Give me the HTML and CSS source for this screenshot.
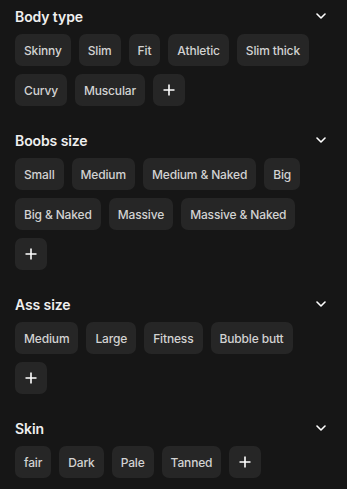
FILE: index.html
```html
<!DOCTYPE html>
<html>
<head>
<meta charset="utf-8">
<link rel="stylesheet" href="styles.css">
</head>
<body>
<div class="panel">
  <section class="group">
    <div class="group-head"><span class="title">Body type</span>
      <svg class="chev" width="10" height="6" viewBox="0 0 10 6"><path d="M1 1l4 4 4-4" fill="none" stroke="#fff" stroke-width="1.6" stroke-linecap="round" stroke-linejoin="round"/></svg></div>
    <div class="chips">
      <span class="chip">Skinny</span><span class="chip">Slim</span><span class="chip">Fit</span><span class="chip">Athletic</span><span class="chip">Slim thick</span>
      <span class="chip">Curvy</span><span class="chip">Muscular</span>
      <span class="chip plus"><svg width="12" height="12" viewBox="0 0 12 12"><path d="M6 0.5v11M0.5 6h11" stroke="#fff" stroke-width="1.6"/></svg></span>
    </div>
  </section>
  <section class="group">
    <div class="group-head"><span class="title">Boobs size</span>
      <svg class="chev" width="10" height="6" viewBox="0 0 10 6"><path d="M1 1l4 4 4-4" fill="none" stroke="#fff" stroke-width="1.6" stroke-linecap="round" stroke-linejoin="round"/></svg></div>
    <div class="chips">
      <span class="chip">Small</span><span class="chip">Medium</span><span class="chip">Medium &amp; Naked</span><span class="chip">Big</span>
      <span class="chip">Big &amp; Naked</span><span class="chip">Massive</span><span class="chip">Massive &amp; Naked</span>
      <span class="chip plus"><svg width="12" height="12" viewBox="0 0 12 12"><path d="M6 0.5v11M0.5 6h11" stroke="#fff" stroke-width="1.6"/></svg></span>
    </div>
  </section>
  <section class="group">
    <div class="group-head"><span class="title">Ass size</span>
      <svg class="chev" width="10" height="6" viewBox="0 0 10 6"><path d="M1 1l4 4 4-4" fill="none" stroke="#fff" stroke-width="1.6" stroke-linecap="round" stroke-linejoin="round"/></svg></div>
    <div class="chips">
      <span class="chip">Medium</span><span class="chip">Large</span><span class="chip">Fitness</span><span class="chip">Bubble butt</span>
      <span class="chip plus"><svg width="12" height="12" viewBox="0 0 12 12"><path d="M6 0.5v11M0.5 6h11" stroke="#fff" stroke-width="1.6"/></svg></span>
    </div>
  </section>
  <section class="group">
    <div class="group-head"><span class="title">Skin</span>
      <svg class="chev" width="10" height="6" viewBox="0 0 10 6"><path d="M1 1l4 4 4-4" fill="none" stroke="#fff" stroke-width="1.6" stroke-linecap="round" stroke-linejoin="round"/></svg></div>
    <div class="chips">
      <span class="chip">fair</span><span class="chip">Dark</span><span class="chip">Pale</span><span class="chip">Tanned</span>
      <span class="chip plus"><svg width="12" height="12" viewBox="0 0 12 12"><path d="M6 0.5v11M0.5 6h11" stroke="#fff" stroke-width="1.6"/></svg></span>
    </div>
  </section>
</div>
</body>
</html>
```
FILE: styles.css
```css
html, body {
  margin: 0;
  padding: 0;
  background: #161616;
}
body {
  font-family: Inter, "Noto Sans", sans-serif;
  width: 347px;
  height: 489px;
  overflow: hidden;
}
.panel {
  display: flex;
  flex-direction: column;
  gap: 24px;
  padding: 6px 21px 0 15px;
}
.group-head {
  height: 20px;
  display: flex;
  align-items: center;
  justify-content: space-between;
  margin-bottom: 8px;
}
.title {
  color: #efefef;
  font-size: 14px;
  font-weight: 600;
  letter-spacing: -0.1px;
}
.chev {
  display: block;
}
.chips {
  display: flex;
  flex-wrap: wrap;
  gap: 8px;
}
.chip {
  height: 32px;
  box-sizing: border-box;
  padding: 0 9px;
  display: inline-flex;
  align-items: center;
  background: #262626;
  border-radius: 7px;
  color: #d2d2d2;
  font-size: 12px;
  font-weight: 500;
  letter-spacing: -0.15px;
}
.chip.plus {
  width: 32px;
  padding: 0;
  justify-content: center;
}
.plus svg {
  display: block;
}
```
